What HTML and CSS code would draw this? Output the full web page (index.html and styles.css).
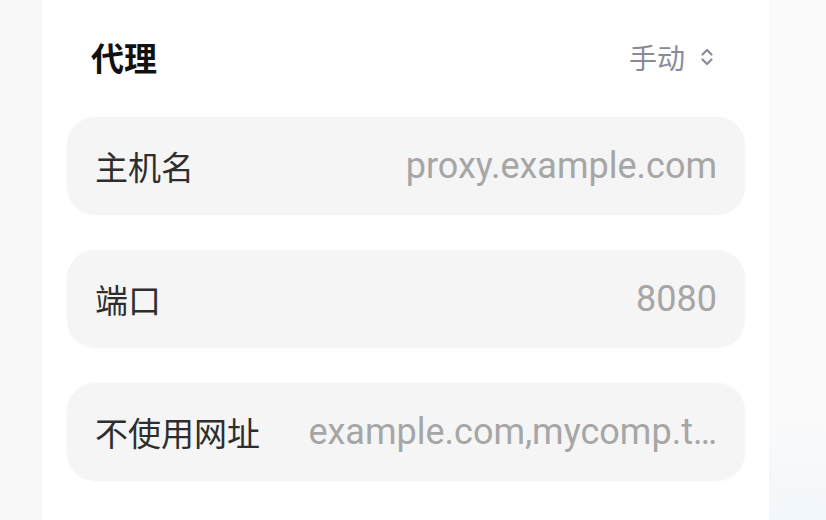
FILE: index.html
```html
<!DOCTYPE html>
<html lang="zh-CN">
<head>
<meta charset="utf-8">
<title>代理</title>
<link rel="stylesheet" href="styles.css">
</head>
<body>
  <div class="screen">
    <div class="side side-left"></div>
    <main class="panel">
      <header class="panel-head">
        <h1 class="panel-title">代理</h1>
        <button class="mode-select" type="button">
          <span>手动</span>
          <svg class="chevrons" width="14" height="22" viewBox="0 0 14 22" aria-hidden="true">
            <path d="M2.5 8.5 L7 4 L11.5 8.5" />
            <path d="M2.5 13.5 L7 18 L11.5 13.5" />
          </svg>
        </button>
      </header>
      <section class="fields">
        <label class="field">
          <span class="field-label">主机名</span>
          <span class="field-value">proxy.example.com</span>
        </label>
        <label class="field">
          <span class="field-label">端口</span>
          <span class="field-value">8080</span>
        </label>
        <label class="field">
          <span class="field-label">不使用网址</span>
          <span class="field-value">example.com,mycomp.t…</span>
        </label>
      </section>
    </main>
    <div class="side side-right"></div>
  </div>
</body>
</html>
```

FILE: styles.css
```css
* {
  box-sizing: border-box;
}

html,
body {
  margin: 0;
  height: 100%;
}

body {
  font-family: Roboto, "Noto Sans CJK SC", sans-serif;
  background: #ffffff;
}

.screen {
  display: flex;
  height: 520px;
  width: 826px;
}

.side-left {
  width: 42px;
  background: #f8f8f8;
}

.side-right {
  width: 57px;
  background: linear-gradient(180deg, #fafafa 0%, #fafafa 80%, #f2f7fb 100%);
}

.panel {
  flex: 1;
  background: #ffffff;
  padding: 0 24px 0 25px;
  display: flex;
  flex-direction: column;
}

.panel-head {
  height: 117px;
  display: flex;
  align-items: center;
  justify-content: space-between;
  padding: 0 31px 4px 24px;
}

.panel-title {
  margin: 0;
  font-family: "Noto Sans CJK SC", sans-serif;
  font-size: 33px;
  font-weight: 700;
  color: #111111;
}

.mode-select {
  display: flex;
  align-items: center;
  gap: 15px;
  border: 0;
  background: none;
  padding: 0;
  font-family: "Noto Sans CJK SC", sans-serif;
  font-size: 28px;
  color: #8a8a98;
}

.chevrons {
  fill: none;
  stroke: #8a8a98;
  stroke-width: 2.2;
  stroke-linecap: round;
  stroke-linejoin: round;
}

.fields {
  display: flex;
  flex-direction: column;
  gap: 35px;
}

.field {
  height: 98px;
  display: flex;
  align-items: center;
  gap: 38px;
  padding: 0 28px;
  background: #f5f5f5;
  border-radius: 28px;
  box-shadow: 0 0 4px rgba(0, 0, 0, 0.02);
}

.field-label {
  flex: none;
  font-family: "Noto Sans CJK SC", sans-serif;
  font-size: 33px;
  color: #2e2e2e;
}

.field-value {
  flex: 1;
  min-width: 0;
  text-align: right;
  font-size: 36px;
  color: #a6a6a6;
  white-space: nowrap;
}
```
